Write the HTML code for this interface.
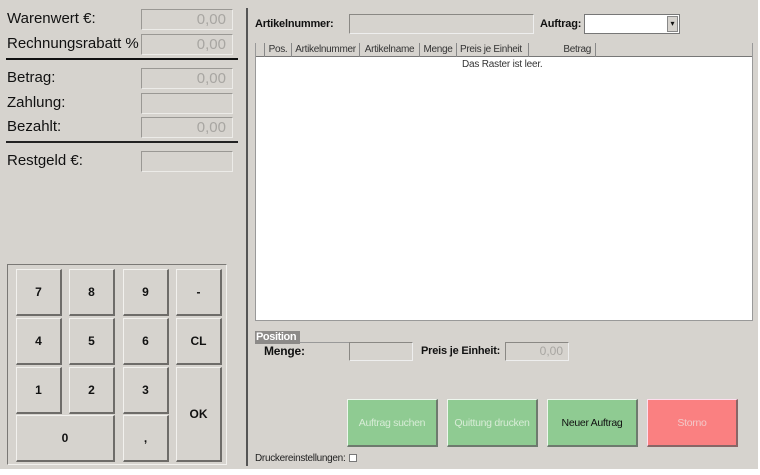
<!DOCTYPE html>
<html><head><meta charset="utf-8"><style>
*{box-sizing:border-box;margin:0;padding:0}
body{width:760px;height:475px;background:#fff;position:relative;overflow:hidden;font-family:"Liberation Sans",sans-serif;color:#111}
.bg{position:absolute;left:0;top:0;width:758px;height:469px;background:#d6d3ce}
.a{position:absolute}
.lbl{position:absolute;font-size:15px;color:#111}
.inp{position:absolute;width:92px;height:21px;border:1px solid #9a9894;border-right-color:#ecebe8;border-bottom-color:#ecebe8;background:#d6d3ce;text-align:right;color:#a8a6a2;font-size:15px;padding-right:6px;line-height:19px}
.kb{position:absolute;border:1px solid #f2f1ee;border-right:2px solid #6e6c69;border-bottom:2px solid #6e6c69;background:#d6d3ce;font-size:12px;font-weight:bold;display:flex;align-items:center;justify-content:center}
.btn{position:absolute;top:399px;width:91px;height:48px;background:#8fcb92;border:1px solid #eef7ee;border-right:2px solid #6e7a6e;border-bottom:2px solid #6e7a6e;font-size:10.5px;display:flex;align-items:center;justify-content:center;color:#d7ecd6;letter-spacing:-0.3px}
.hd{position:absolute;top:43px;height:14px;font-size:10px;color:#333;border-right:1px solid #888;line-height:14px;text-align:center;letter-spacing:-0.3px;white-space:nowrap;overflow:hidden}
.b{font-size:11px;font-weight:bold;letter-spacing:-0.2px;white-space:nowrap}
</style></head><body>
<div class="bg"></div>
<div class="lbl" style="left:7px;top:10px">Warenwert €:</div>
<div class="inp" style="left:141px;top:9px">0,00</div>
<div class="lbl" style="left:7px;top:35px">Rechnungsrabatt %</div>
<div class="inp" style="left:141px;top:34px">0,00</div>
<div class="a" style="left:6px;top:58px;width:232px;height:2px;background:#111"></div>
<div class="lbl" style="left:7px;top:69px">Betrag:</div>
<div class="inp" style="left:141px;top:68px">0,00</div>
<div class="lbl" style="left:7px;top:94px">Zahlung:</div>
<div class="inp" style="left:141px;top:93px"></div>
<div class="lbl" style="left:7px;top:118px">Bezahlt:</div>
<div class="inp" style="left:141px;top:117px">0,00</div>
<div class="a" style="left:6px;top:141px;width:232px;height:2px;background:#222"></div>
<div class="lbl" style="left:7px;top:152px">Restgeld €:</div>
<div class="inp" style="left:141px;top:151px"></div>

<div class="a" style="left:7px;top:264px;width:220px;height:201px;border:1px solid #7a7875;border-right-color:#f2f1ee;border-bottom-color:#f2f1ee"></div>
<div class="kb" style="left:16px;top:269px;width:46px;height:47px">7</div>
<div class="kb" style="left:69px;top:269px;width:46px;height:47px">8</div>
<div class="kb" style="left:123px;top:269px;width:46px;height:47px">9</div>
<div class="kb" style="left:176px;top:269px;width:46px;height:47px">-</div>
<div class="kb" style="left:16px;top:318px;width:46px;height:47px">4</div>
<div class="kb" style="left:69px;top:318px;width:46px;height:47px">5</div>
<div class="kb" style="left:123px;top:318px;width:46px;height:47px">6</div>
<div class="kb" style="left:176px;top:318px;width:46px;height:47px">CL</div>
<div class="kb" style="left:16px;top:367px;width:46px;height:47px">1</div>
<div class="kb" style="left:69px;top:367px;width:46px;height:47px">2</div>
<div class="kb" style="left:123px;top:367px;width:46px;height:47px">3</div>
<div class="kb" style="left:176px;top:367px;width:46px;height:95px">OK</div>
<div class="kb" style="left:16px;top:415px;width:99px;height:47px">0</div>
<div class="kb" style="left:123px;top:415px;width:46px;height:47px">,</div>

<div class="a" style="left:246px;top:8px;width:2px;height:458px;background:#555"></div>

<div class="a b" style="left:255px;top:18px">Artikelnummer:</div>
<div class="a" style="left:349px;top:14px;width:185px;height:20px;border:1px solid #8a8884;border-right-color:#eee;border-bottom-color:#eee"></div>
<div class="a b" style="left:540px;top:18px">Auftrag:</div>
<div class="a" style="left:584px;top:14px;width:96px;height:20px;background:#fff;border:1px solid #777"></div>
<div class="a" style="left:667px;top:16px;width:11px;height:16px;background:#d6d3ce;border:1px solid #888;font-size:8px;text-align:center;line-height:14px">▾</div>

<div class="a" style="left:255px;top:43px;width:498px;height:278px;background:#fff;border:1px solid #999"></div>
<div class="a" style="left:256px;top:43px;width:496px;height:14px;background:#d6d3ce;border-bottom:1px solid #777"></div>
<div class="hd" style="left:256px;width:9px"></div>
<div class="hd" style="left:265px;width:27px">Pos.</div>
<div class="hd" style="left:292px;width:68px">Artikelnummer</div>
<div class="hd" style="left:360px;width:60px">Artikelname</div>
<div class="hd" style="left:420px;width:37px">Menge</div>
<div class="hd" style="left:457px;width:72px;text-align:left;padding-left:3px">Preis je Einheit</div>
<div class="hd" style="left:529px;width:67px;text-align:right;padding-right:4px">Betrag</div>
<div class="a" style="left:462px;top:59px;font-size:10px;color:#333;letter-spacing:-0.2px">Das Raster ist leer.</div>

<div class="a" style="left:255px;top:331px;width:45px;height:13px;background:#8c8a88;color:#fff;font-size:11px;font-weight:bold;line-height:13px;padding-left:1px;letter-spacing:-0.4px;white-space:nowrap">Position</div>
<div class="a" style="left:300px;top:342px;width:50px;height:1px;background:#999"></div>
<div class="a b" style="left:264px;top:344px;font-size:12px">Menge:</div>
<div class="a" style="left:349px;top:342px;width:64px;height:19px;border:1px solid #8a8884;border-right-color:#eee;border-bottom-color:#eee"></div>
<div class="a b" style="left:421px;top:345px">Preis je Einheit:</div>
<div class="a" style="left:505px;top:342px;width:64px;height:19px;border:1px solid #8a8884;border-right-color:#eee;border-bottom-color:#eee;text-align:right;color:#a8a6a2;font-size:12px;padding-right:5px;line-height:17px">0,00</div>

<div class="btn" style="left:347px">Auftrag suchen</div>
<div class="btn" style="left:447px">Quittung drucken</div>
<div class="btn" style="left:547px;color:#111">Neuer Auftrag</div>
<div class="btn" style="left:647px;background:#fa8081;border-color:#fde;border-right-color:#866;border-bottom-color:#866;color:#f2c8c8">Storno</div>

<div class="a" style="left:255px;top:453px;font-size:10px;color:#222;letter-spacing:-0.3px">Druckereinstellungen:</div>
<div class="a" style="left:349px;top:454px;width:8px;height:8px;background:#fff;border:1px solid #777"></div>
</body></html>
